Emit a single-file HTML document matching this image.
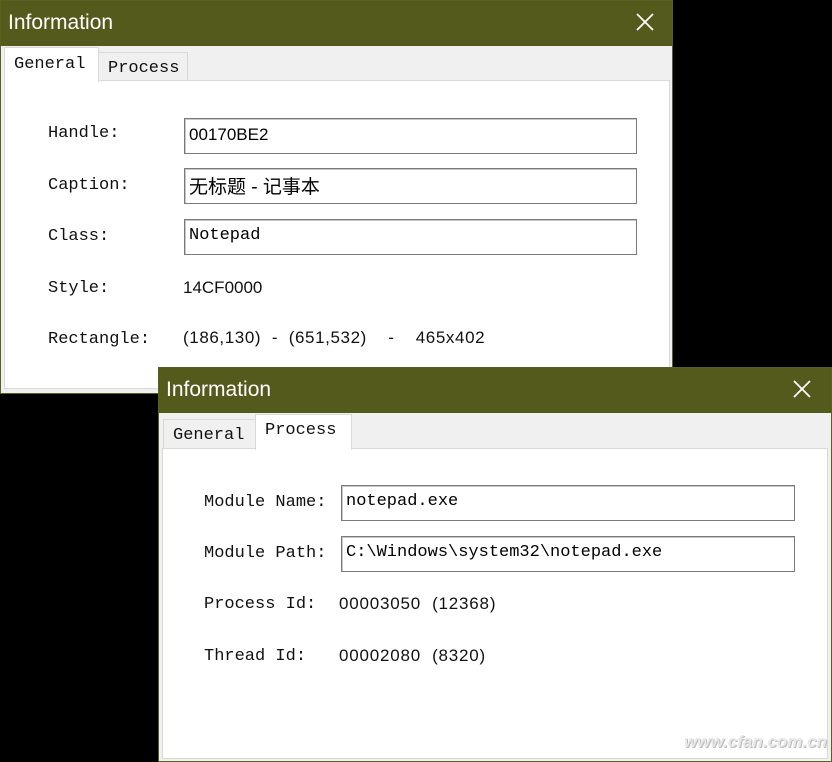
<!DOCTYPE html>
<html><head><meta charset="utf-8"><style>
*{margin:0;padding:0;box-sizing:border-box}
body{width:832px;height:762px;background:#000;position:relative;overflow:hidden;font-family:"Liberation Mono","Noto Serif CJK SC",monospace}
.win{position:absolute;background:#f0f0f0;border:1px solid #5a6020}
.title{position:absolute;left:0;top:0;right:0;height:45px;background:#545a1c;color:#fff;font:21px "Liberation Sans",sans-serif;padding:10px 0 0 7px}
.x{position:absolute;top:10px;width:22px;height:22px}
.panel{position:absolute;background:#fff;border:1px solid #d9d9d9}
.tab{position:absolute;font-size:17px;color:#111;border:1px solid #d9d9d9;padding-left:9px;line-height:30px}
.lbl{position:absolute;font-size:17px;color:#111;white-space:pre}
.box{position:absolute;border:1px solid #7a7a7a;background:#fff;height:36px;font-size:17px;padding:6px 0 0 4px;white-space:pre;color:#000;box-shadow:inset 1px 1px 0 #c8c8c8}
.sans{font-family:"Liberation Sans","Noto Sans CJK SC",sans-serif;font-size:17px}
</style></head><body>
<div class="win" style="left:0;top:0;width:673px;height:394px">
<div class="title">Information</div>
<svg class="x" style="left:633px" viewBox="0 0 22 22"><path d="M3 3L19 19M19 3L3 19" stroke="#fff" stroke-width="1.8"/></svg>
<div class="panel" style="left:3px;top:79px;width:666px;height:309px"></div>
<div class="tab" style="left:97px;top:51px;width:90px;height:29px;background:#f0f0f0;line-height:31px">Process</div>
<div class="tab" style="left:3px;top:46px;width:95px;height:35px;background:#fff;border-bottom:none;line-height:34px">General</div>
<div class="lbl" style="left:47px;top:123px">Handle:</div>
<div class="lbl" style="left:47px;top:175px">Caption:</div>
<div class="lbl" style="left:47px;top:226px">Class:</div>
<div class="lbl" style="left:47px;top:278px">Style:</div>
<div class="lbl" style="left:47px;top:329px">Rectangle:</div>
<div class="box sans" style="left:183px;top:117px;width:453px">00170BE2</div>
<div class="box sans" style="left:183px;top:167px;width:453px;font-size:19px;padding-top:3px">无标题 - 记事本</div>
<div class="box" style="left:183px;top:218px;width:453px">Notepad</div>
<div class="lbl sans" style="left:182px;top:277px">14CF0000</div>
<div class="lbl sans" style="left:182px;top:327px;letter-spacing:0.6px">(186,130)  -  (651,532)    -    465x402</div>
</div>
<div class="win" style="left:158px;top:367px;width:674px;height:395px">
<div class="title">Information</div>
<svg class="x" style="left:632px" viewBox="0 0 22 22"><path d="M3 3L19 19M19 3L3 19" stroke="#fff" stroke-width="1.8"/></svg>
<div class="panel" style="left:3px;top:80px;width:666px;height:311px"></div>
<div class="tab" style="left:4px;top:51px;width:93px;height:30px;background:#f0f0f0;line-height:32px">General</div>
<div class="tab" style="left:96px;top:46px;width:97px;height:36px;background:#fff;border-bottom:none;line-height:32px">Process</div>
<div class="lbl" style="left:45px;top:125px">Module Name:</div>
<div class="lbl" style="left:45px;top:176px">Module Path:</div>
<div class="lbl" style="left:45px;top:227px">Process Id:</div>
<div class="lbl" style="left:45px;top:279px">Thread Id:</div>
<div class="box" style="left:182px;top:117px;width:454px">notepad.exe</div>
<div class="box" style="left:182px;top:168px;width:454px">C:\Windows\system32\notepad.exe</div>
<div class="lbl sans" style="left:180px;top:226px;letter-spacing:0.8px">00003050  (12368)</div>
<div class="lbl sans" style="left:180px;top:278px;letter-spacing:0.8px">00002080  (8320)</div>
<div class="lbl" style="left:525px;top:364px;color:#e8e8e8;font:italic bold 17px 'Liberation Sans',sans-serif;text-shadow:1px 1px 0 #bbb">www.cfan.com.cn</div>
</div>
</body></html>
